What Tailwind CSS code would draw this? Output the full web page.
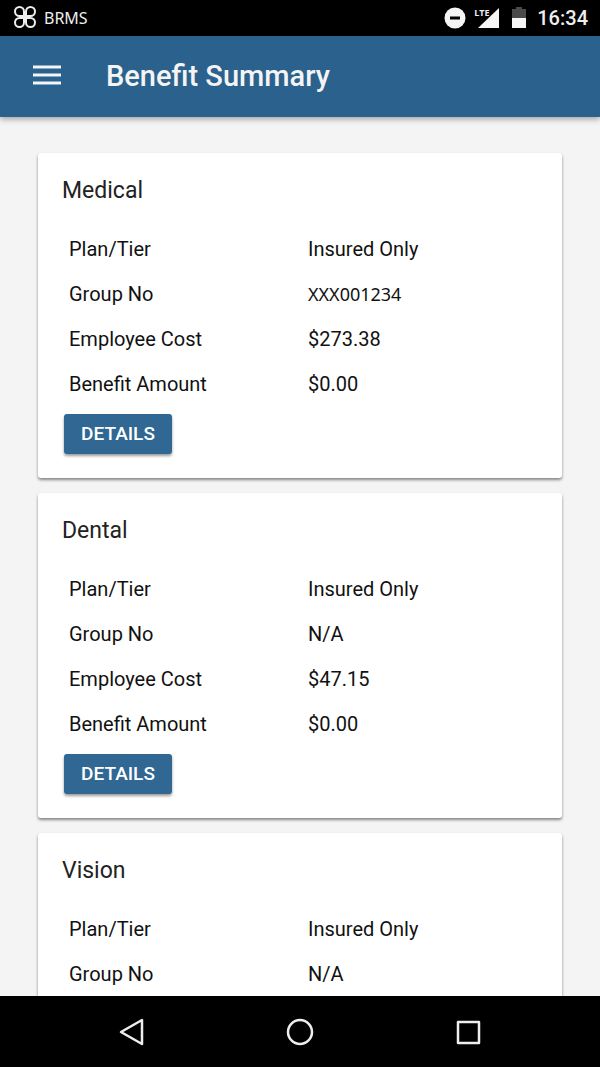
<!DOCTYPE html>
<html lang="en">
<head>
  <meta charset="UTF-8" />
  <meta name="viewport" content="width=device-width, initial-scale=1.0" />
  <title>Benefit Summary</title>
  <script src="https://cdn.jsdelivr.net/npm/@tailwindcss/browser@4"></script>
</head>
<body class="h-screen flex flex-col bg-[#f4f4f4] text-[#111] font-[Roboto,sans-serif]">

  <!-- Status bar -->
  <div class="h-9 shrink-0 bg-black text-[#eee] flex items-center justify-between pl-[14px] pr-3">
    <div class="flex items-center gap-2">
      <svg class="w-[22px] h-6" viewBox="0 0 22 24" fill="none" stroke="currentColor" stroke-width="2">
        <path d="M10 10H5.500A4.500 4.500 0 1 1 10 5.500Z" />
        <path d="M12 10h4.500A4.500 4.500 0 1 0 12 5.500Z" />
        <path d="M10 12H5.500A4.500 4.500 0 1 0 10 16.500Z" />
        <path d="M12 12h4.500A4.500 4.500 0 1 1 12 16.500Z" />
      </svg>
      <span class="font-['Noto_Sans',sans-serif] text-base leading-6">BRMS</span>
    </div>
    <div class="flex items-center">
      <svg class="w-[22px] h-[22px] mr-2" viewBox="0 0 22 22">
        <circle cx="11" cy="11" r="10.500" fill="#f5f5f5" />
        <path d="M6 9.500h10v3H6z" fill="#000" />
      </svg>
      <div class="relative w-[26px] h-[22px] mr-3">
        <svg class="w-[26px] h-[22px]" viewBox="0 0 26 22"><path d="M4 21L25 1v20z" fill="#f5f5f5" /></svg>
        <span class="absolute left-0 top-0 text-[9px] leading-3 font-bold font-['Open_Sans',sans-serif]">LTE</span>
      </div>
      <svg class="w-[14px] h-[22px] mr-[11px]" viewBox="0 0 14 22">
        <path d="M0 2h4V0h6v2h4v9H0z" fill="#4a4a4a" />
        <path d="M0 11h14v10H0z" fill="#f5f5f5" />
      </svg>
      <span class="text-xl leading-6 font-medium">16:34</span>
    </div>
  </div>

  <!-- Header -->
  <header class="relative h-[81px] shrink-0 bg-[#2a618d] text-[#f4f4f4] shadow-[0_2px_6px_rgba(0,0,0,0.35)] flex items-center pl-8 gap-11">
    <button type="button" aria-label="Menu">
      <svg class="w-[30px] h-6" viewBox="0 0 30 24" fill="currentColor">
        <path d="M1 0.500h28v3H1zM1 8.500h28v3H1zM1 16.500h28v3H1z" />
      </svg>
    </button>
    <h1 class="text-[29px] font-medium">Benefit Summary</h1>
  </header>

  <!-- Benefit cards -->
  <main class="flex-1 min-h-0 overflow-y-auto [scrollbar-width:none] px-[38px] pt-9 pb-4 flex flex-col gap-[15px]">

    <section class="shrink-0 bg-white rounded-[3px] shadow-[0_2px_3px_rgba(0,0,0,0.45)] px-6 pb-6">
      <h2 class="h-[73px] pt-1 flex items-center text-[23px] text-[#222]">Medical</h2>
      <table class="w-full table-fixed text-xl text-left">
        <tbody>
          <tr class="h-[45px]"><th scope="row" class="font-normal pl-[7px]">Plan/Tier</th><td class="pl-2">Insured Only</td></tr>
          <tr class="h-[45px]"><th scope="row" class="font-normal pl-[7px]">Group No</th><td class="pl-2 font-['Noto_Sans',sans-serif] text-lg">XXX001234</td></tr>
          <tr class="h-[45px]"><th scope="row" class="font-normal pl-[7px]">Employee Cost</th><td class="pl-2">$273.38</td></tr>
          <tr class="h-[45px]"><th scope="row" class="font-normal pl-[7px]">Benefit Amount</th><td class="pl-2">$0.00</td></tr>
        </tbody>
      </table>
      <button type="button" class="block mt-2 ml-[2px] h-10 w-[108px] rounded-[3px] bg-[#306793] text-white text-[19px] font-medium shadow-[0_2px_3px_rgba(0,0,0,0.4)]">DETAILS</button>
    </section>

    <section class="shrink-0 bg-white rounded-[3px] shadow-[0_2px_3px_rgba(0,0,0,0.45)] px-6 pb-6">
      <h2 class="h-[73px] pt-1 flex items-center text-[23px] text-[#222]">Dental</h2>
      <table class="w-full table-fixed text-xl text-left">
        <tbody>
          <tr class="h-[45px]"><th scope="row" class="font-normal pl-[7px]">Plan/Tier</th><td class="pl-2">Insured Only</td></tr>
          <tr class="h-[45px]"><th scope="row" class="font-normal pl-[7px]">Group No</th><td class="pl-2">N/A</td></tr>
          <tr class="h-[45px]"><th scope="row" class="font-normal pl-[7px]">Employee Cost</th><td class="pl-2">$47.15</td></tr>
          <tr class="h-[45px]"><th scope="row" class="font-normal pl-[7px]">Benefit Amount</th><td class="pl-2">$0.00</td></tr>
        </tbody>
      </table>
      <button type="button" class="block mt-2 ml-[2px] h-10 w-[108px] rounded-[3px] bg-[#306793] text-white text-[19px] font-medium shadow-[0_2px_3px_rgba(0,0,0,0.4)]">DETAILS</button>
    </section>

    <section class="shrink-0 bg-white rounded-[3px] shadow-[0_2px_3px_rgba(0,0,0,0.45)] px-6 pb-6">
      <h2 class="h-[73px] pt-1 flex items-center text-[23px] text-[#222]">Vision</h2>
      <table class="w-full table-fixed text-xl text-left">
        <tbody>
          <tr class="h-[45px]"><th scope="row" class="font-normal pl-[7px]">Plan/Tier</th><td class="pl-2">Insured Only</td></tr>
          <tr class="h-[45px]"><th scope="row" class="font-normal pl-[7px]">Group No</th><td class="pl-2">N/A</td></tr>
        </tbody>
      </table>
    </section>
  </main>

  <!-- Navigation bar -->
  <nav class="h-[71px] shrink-0 bg-black text-[#eee] flex items-center justify-between px-[118px]">
    <button type="button" aria-label="Back">
      <svg class="w-7 h-7" viewBox="0 0 28 28" fill="none" stroke="currentColor" stroke-width="2.500" stroke-linejoin="round"><path d="M24 2v24L3 14z" /></svg>
    </button>
    <button type="button" aria-label="Home">
      <svg class="w-7 h-7" viewBox="0 0 28 28" fill="none" stroke="currentColor" stroke-width="2.500"><circle cx="14" cy="14" r="12" /></svg>
    </button>
    <button type="button" aria-label="Recent apps">
      <svg class="w-7 h-7" viewBox="0 0 28 28" fill="none" stroke="currentColor" stroke-width="2.500" stroke-linejoin="round"><path d="M4 4h21v21H4z" /></svg>
    </button>
  </nav>

</body>
</html>
